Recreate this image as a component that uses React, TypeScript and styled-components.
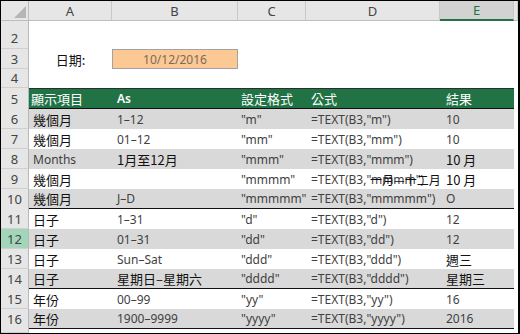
import React from 'react';
import styled, { createGlobalStyle, css } from 'styled-components';

const GlobalStyle = createGlobalStyle`
  html, body {
    margin: 0;
    padding: 0;
    background: #ffffff;
  }
`;

const latinFont = `"Noto Sans", "Noto Sans CJK TC", sans-serif`;
const cjkFont = `"Noto Sans CJK TC", "Noto Sans", sans-serif`;

// column widths: row head, A, B, C, D, E, sliver of F
const COLS = '28px 83px 126px 68px 134px 74px 4px';
const DATA_COLS = '83px 126px 68px 134px 74px';

const Sheet = styled.div`
  width: 520px;
  height: 334px;
  box-sizing: border-box;
  border: 1px solid #000;
  border-right-width: 2px;
  overflow: hidden;
  background: #fff;
  font-family: ${latinFont};
`;

const HeaderRow = styled.div`
  display: grid;
  grid-template-columns: ${COLS};
  height: 20px;
`;

const Corner = styled.div`
  background: #e6e6e6;
  border-right: 1px solid #bdbdbd;
  border-bottom: 1px solid #bdbdbd;
  box-sizing: border-box;
  display: flex;
  align-items: flex-end;
  justify-content: flex-end;
  padding: 0 2px 2px 0;
`;

const ColHead = styled.div<{ $active?: boolean }>`
  box-sizing: border-box;
  background: #e6e6e6;
  border-right: 1px solid #c8c8c8;
  border-bottom: 1px solid #bdbdbd;
  color: #444;
  font-size: 13px;
  display: flex;
  align-items: center;
  justify-content: center;
  ${p =>
    p.$active &&
    css`
      background: #d2d2d2;
      color: #217346;
      border-bottom: 2px solid #217346;
    `}
`;

const Row = styled.div<{ $h: number }>`
  display: grid;
  grid-template-columns: 28px 485px 4px;
  height: ${p => p.$h}px;
`;

const RowHead = styled.div<{ $active?: boolean; $low?: boolean }>`
  box-sizing: border-box;
  background: ${p => (p.$active ? '#a3d6b8' : '#e6e6e6')};
  border-right: 1px solid #b8b8b8;
  border-bottom: 1px solid #cfcfcf;
  color: #444;
  font-size: 13px;
  display: flex;
  justify-content: center;
  align-items: ${p => (p.$low ? 'flex-end' : 'center')};
  padding-bottom: ${p => (p.$low ? '1px' : '0')};
`;

const Band = styled.div<{ $fill: string; $rule?: boolean; $top?: boolean }>`
  box-sizing: border-box;
  display: grid;
  grid-template-columns: ${DATA_COLS};
  background: ${p => p.$fill};
  border-bottom: ${p => (p.$rule ? '2px solid #111' : 'none')};
  border-top: ${p => (p.$top ? '1px solid #2d2d2d' : 'none')};
`;

const Cell = styled.div<{ $pad: number; $ink?: boolean; $cjk?: boolean; $light?: boolean; $center?: boolean }>`
  position: relative;
  display: flex;
  align-items: center;
  justify-content: ${p => (p.$center ? 'center' : 'flex-start')};
  padding-left: ${p => p.$pad}px;
  white-space: nowrap;
  font-family: ${p => (p.$cjk ? cjkFont : latinFont)};
  font-size: ${p => (p.$cjk ? '13px' : '12px')};
  color: ${p => (p.$light ? '#ffffff' : p.$ink ? '#111' : '#3f3f3f')};
`;

const HeadText = styled.span<{ $bold?: boolean }>`
  font-weight: ${p => (p.$bold ? 600 : 400)};
`;

const DateBox = styled.div`
  box-sizing: border-box;
  width: 126px;
  height: 20px;
  background: #fcc995;
  border: 1px solid #a3a3a3;
  display: flex;
  align-items: center;
  justify-content: center;
  font-size: 12px;
  color: #7b6a5c;
`;

const Overlay = styled.span`
  position: absolute;
  left: 64px;
  top: 2px;
  font-family: ${cjkFont};
  font-size: 12px;
  color: #111;
`;

const Spacer = styled.div``;

type DataRow = {
  n: number;
  a: string;
  b: string;
  c: string;
  d: string;
  e: string;
  overlay?: string;
  rule?: boolean;
};

const rows: DataRow[] = [
  { n: 6, a: '幾個月', b: '1–12', c: '"m"', d: '=TEXT(B3,"m")', e: '10' },
  { n: 7, a: '幾個月', b: '01–12', c: '"mm"', d: '=TEXT(B3,"mm")', e: '10' },
  { n: 8, a: 'Months', b: '1月至12月', c: '"mmm"', d: '=TEXT(B3,"mmm")', e: '10 月' },
  { n: 9, a: '幾個月', b: '', c: '"mmmm"', d: '=TEXT(B3,"mmmm")', e: '10 月', overlay: '一月—十二月' },
  { n: 10, a: '幾個月', b: 'J–D', c: '"mmmmm"', d: '=TEXT(B3,"mmmmm")', e: 'O', rule: true },
  { n: 11, a: '日子', b: '1–31', c: '"d"', d: '=TEXT(B3,"d")', e: '12' },
  { n: 12, a: '日子', b: '01–31', c: '"dd"', d: '=TEXT(B3,"dd")', e: '12' },
  { n: 13, a: '日子', b: 'Sun–Sat', c: '"ddd"', d: '=TEXT(B3,"ddd")', e: '週三' },
  { n: 14, a: '日子', b: '星期日–星期六', c: '"dddd"', d: '=TEXT(B3,"dddd")', e: '星期三', rule: true },
  { n: 15, a: '年份', b: '00–99', c: '"yy"', d: '=TEXT(B3,"yy")', e: '16' },
  { n: 16, a: '年份', b: '1900–9999', c: '"yyyy"', d: '=TEXT(B3,"yyyy")', e: '2016', rule: true },
];

const hasCjk = (s: string) => /[\u3000-\u9fff]/.test(s);

const pads = [4, 5, 3, 5, 6];

const App: React.FC = () => {
  return (
    <>
      <GlobalStyle />
      <Sheet>
        <HeaderRow>
          <Corner>
            <svg width="12" height="12" viewBox="0 0 12 12">
              <polygon points="12,0 12,12 0,12" fill="#b5b5b5" />
            </svg>
          </Corner>
          <ColHead>A</ColHead>
          <ColHead>B</ColHead>
          <ColHead>C</ColHead>
          <ColHead>D</ColHead>
          <ColHead $active>E</ColHead>
          <ColHead />
        </HeaderRow>

        <Row $h={28}>
          <RowHead $low>2</RowHead>
          <Band $fill="#fff" />
          <Spacer />
        </Row>
        <Row $h={20}>
          <RowHead>3</RowHead>
          <Band $fill="#fff">
            <Cell $pad={0} $cjk $ink $center>日期:</Cell>
            <DateBox>10/12/2016</DateBox>
          </Band>
          <Spacer />
        </Row>
        <Row $h={19}>
          <RowHead>4</RowHead>
          <Band $fill="#fff" />
          <Spacer />
        </Row>
        <Row $h={21}>
          <RowHead>5</RowHead>
          <Band $fill="#217346" $rule $top>
            <Cell $pad={2} $cjk $light>顯示項目</Cell>
            <Cell $pad={5} $light><HeadText $bold>As</HeadText></Cell>
            <Cell $pad={3} $cjk $light>設定格式</Cell>
            <Cell $pad={5} $cjk $light>公式</Cell>
            <Cell $pad={6} $cjk $light>結果</Cell>
          </Band>
          <Spacer />
        </Row>

        {rows.map((r, i) => {
          const cells = [r.a, r.b, r.c, r.d, r.e];
          return (
            <Row $h={20} key={r.n}>
              <RowHead $active={r.n === 12}>{r.n}</RowHead>
              <Band $fill={i % 2 === 0 ? '#d9d9d9' : '#ffffff'} $rule={r.rule}>
                {cells.map((t, j) => (
                  <Cell
                    key={j}
                    $pad={pads[j]}
                    $cjk={hasCjk(t)}
                    $ink={hasCjk(t)}
                  >
                    {t}
                    {j === 3 && r.overlay && <Overlay>{r.overlay}</Overlay>}
                  </Cell>
                ))}
              </Band>
              <Spacer />
            </Row>
          );
        })}

        <Row $h={4}>
          <RowHead />
          <Band $fill="#fff" />
          <Spacer />
        </Row>
      </Sheet>
    </>
  );
};

export default App;
